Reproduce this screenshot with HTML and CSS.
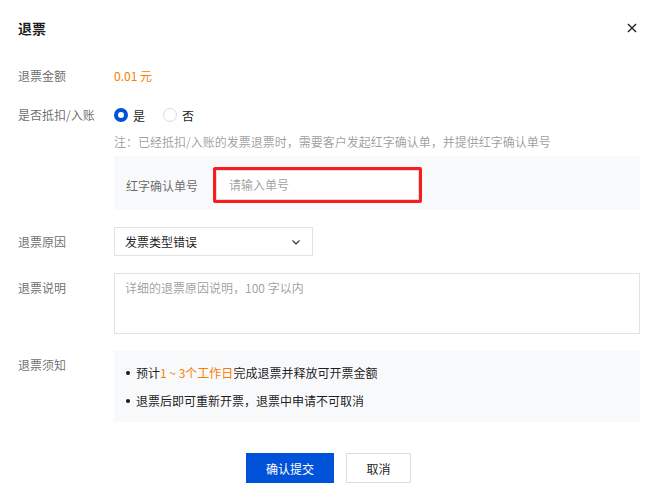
FILE: index.html
```html
<!DOCTYPE html>
<html lang="zh-CN">
<head>
<meta charset="utf-8">
<title>退票</title>
<link rel="stylesheet" href="styles.css">
</head>
<body>
<div class="dialog">
  <div class="header">
    <div class="title">退票</div>
    <svg class="close" width="10" height="10" viewBox="0 0 10 10"><path d="M1 1L9 9M9 1L1 9" stroke="#222" stroke-width="1.4" fill="none"/></svg>
  </div>
  <div class="body">
    <div class="row row-amount">
      <div class="label">退票金额</div>
      <div class="content amount">0.01 元</div>
    </div>
    <div class="row row-deduct">
      <div class="label">是否抵扣/入账</div>
      <div class="content">
        <div class="radios">
          <span class="radio checked"></span><span class="radio-text">是</span>
          <span class="radio"></span><span class="radio-text">否</span>
        </div>
        <div class="note">注：已经抵扣/入账的发票退票时，需要客户发起红字确认单，并提供红字确认单号</div>
        <div class="subbox">
          <div class="sublabel">红字确认单号</div>
          <div class="highlight"><div class="input">请输入单号</div></div>
        </div>
      </div>
    </div>
    <div class="row row-reason">
      <div class="label">退票原因</div>
      <div class="select">
        <span>发票类型错误</span>
        <svg width="10" height="10" viewBox="0 0 10 10"><path d="M1.5 3.5L5 7L8.5 3.5" stroke="#333" stroke-width="1.2" fill="none"/></svg>
      </div>
    </div>
    <div class="row row-desc">
      <div class="label">退票说明</div>
      <div class="textarea">详细的退票原因说明，100 字以内</div>
    </div>
    <div class="row row-notice">
      <div class="label">退票须知</div>
      <div class="notice">
        <div class="item">预计<span class="hl">1 ~ 3个工作日</span>完成退票并释放可开票金额</div>
        <div class="item">退票后即可重新开票，退票中申请不可取消</div>
      </div>
    </div>
  </div>
  <div class="footer">
    <div class="btn primary">确认提交</div>
    <div class="btn default">取消</div>
  </div>
</div>
</body>
</html>
```
FILE: styles.css
```css
body {
  margin: 0;
  background: #fff;
  font-family: "Noto Sans CJK SC", "Noto Sans", sans-serif;
  font-size: 12px;
  color: rgba(0, 0, 0, 0.9);
}
.dialog {
  width: 657px;
  height: 498px;
  box-sizing: border-box;
}
.header {
  height: 55px;
  display: flex;
  align-items: center;
  justify-content: space-between;
  padding: 0 20px 0 18px;
}
.title {
  font-size: 14px;
  font-weight: 700;
  color: rgba(0, 0, 0, 0.9);
}
.body {
  padding: 0 17px 0 18px;
}
.row {
  display: flex;
}
.label {
  width: 96px;
  flex: none;
  line-height: 24px;
  color: rgba(0, 0, 0, 0.6);
}
.content {
  flex: 1;
  min-width: 0;
}
.row-amount {
  margin-top: 9px;
}
.amount {
  line-height: 24px;
  color: #fa7d00;
}
.row-deduct {
  margin-top: 15px;
}
.radios {
  display: flex;
  align-items: center;
  height: 24px;
}
.radio {
  width: 14px;
  height: 14px;
  box-sizing: border-box;
  border-radius: 50%;
  border: 1px solid #dcdcdc;
  background: #fff;
}
.radio.checked {
  border: 4px solid #0052d9;
}
.radio-text {
  margin-left: 5px;
  margin-right: 18px;
  color: rgba(0, 0, 0, 0.9);
}
.note {
  margin-top: 5px;
  line-height: 20px;
  color: rgba(0, 0, 0, 0.4);
}
.subbox {
  margin-top: 4px;
  background: #f8f9fb;
  display: flex;
  align-items: center;
  padding: 11px 12px 7px;
}
.sublabel {
  width: 87px;
  flex: none;
  color: rgba(0, 0, 0, 0.6);
}
.highlight {
  width: 209px;
  box-sizing: border-box;
  border: 3px solid #fa1c1c;
  border-radius: 2px;
}
.input {
  height: 30px;
  box-sizing: border-box;
  border: 1px solid #dcdcdc;
  background: #fff;
  padding-left: 12px;
  line-height: 28px;
  color: rgba(0, 0, 0, 0.4);
}
.row-reason {
  margin-top: 17px;
  align-items: center;
}
.select {
  width: 199px;
  height: 29px;
  box-sizing: border-box;
  border: 1px solid #e3e3e3;
  display: flex;
  align-items: center;
  justify-content: space-between;
  padding: 0 11px 0 10px;
  color: rgba(0, 0, 0, 0.9);
}
.row-desc {
  margin-top: 17px;
}
.row-desc .label {
  padding-top: 3px;
}
.textarea {
  flex: 1;
  height: 61px;
  box-sizing: border-box;
  border: 1px solid #e3e3e3;
  padding: 4px 10px;
  line-height: 20px;
  color: rgba(0, 0, 0, 0.4);
}
.row-notice {
  margin-top: 17px;
}
.row-notice .label {
  padding-top: 2px;
}
.notice {
  flex: 1;
  background: #f8f9fb;
  padding: 12px 12px 11px;
}
.item {
  display: flex;
  align-items: center;
  line-height: 20px;
}
.item + .item {
  margin-top: 8px;
}
.item::before {
  content: "";
  width: 4px;
  height: 4px;
  border-radius: 50%;
  background: rgba(0, 0, 0, 0.9);
  margin-right: 6px;
  flex: none;
}
.hl {
  color: #fa7d00;
}
.footer {
  margin-top: 31px;
  display: flex;
  justify-content: center;
  gap: 12px;
}
.btn {
  height: 30px;
  box-sizing: border-box;
  display: flex;
  align-items: center;
  justify-content: center;
}
.btn.primary {
  width: 88px;
  background: #0052d9;
  color: #fff;
}
.btn.default {
  width: 65px;
  border: 1px solid #dcdcdc;
  color: rgba(0, 0, 0, 0.9);
}
```
